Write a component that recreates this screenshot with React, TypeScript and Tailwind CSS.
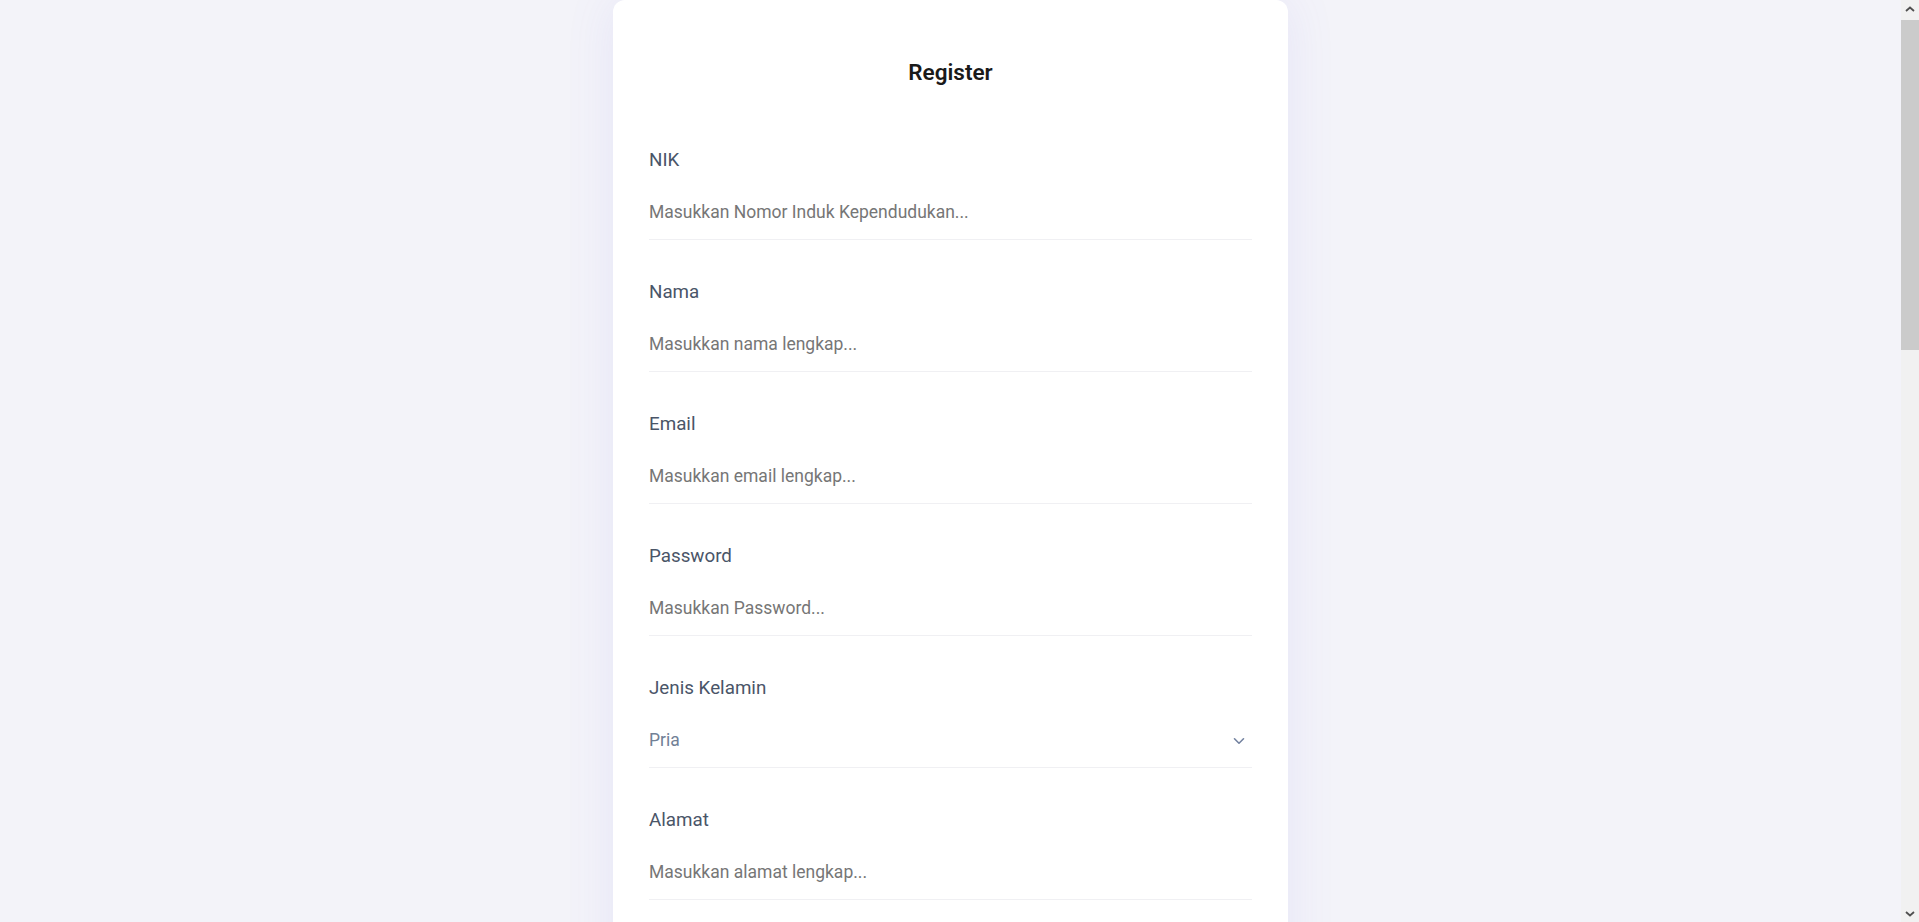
import React from "react";

const fields = [
  { label: "NIK", placeholder: "Masukkan Nomor Induk Kependudukan...", type: "text" },
  { label: "Nama", placeholder: "Masukkan nama lengkap...", type: "text" },
  { label: "Email", placeholder: "Masukkan email lengkap...", type: "email" },
  { label: "Password", placeholder: "Masukkan Password...", type: "password" },
];

const moreFields = [
  { label: "Alamat", placeholder: "Masukkan alamat lengkap...", type: "text" },
  { label: "Nomor Telepon", placeholder: "Masukkan nomor telepon...", type: "text" },
  { label: "Tempat Lahir", placeholder: "Masukkan tempat lahir...", type: "text" },
];

function Field({ label, placeholder, type }: { label: string; placeholder: string; type: string }) {
  return (
    <div className="flex flex-col">
      <label className="text-[18.8px] leading-[28px] text-[#4a5568]">{label}</label>
      <input
        type={type}
        placeholder={placeholder}
        className="mt-[11px] h-[55px] w-full border-b border-[#f0f0f3] bg-transparent text-[17.5px] text-[#4a5568] outline-none placeholder:text-[#767676]"
      />
    </div>
  );
}

function Chevron() {
  return (
    <svg width="12" height="8" viewBox="0 0 12 8" fill="none" className="pointer-events-none absolute right-[7px] top-1/2 -translate-y-1/2">
      <path d="M1.5 1.8 6 6.2 10.5 1.8" stroke="#7382a0" strokeWidth="1.6" strokeLinecap="round" strokeLinejoin="round" />
    </svg>
  );
}

function Scrollbar() {
  return (
    <div className="flex w-[18px] shrink-0 flex-col bg-[#f1f1f1]">
      <div className="flex h-[17px] items-center justify-center">
        <svg width="10" height="6" viewBox="0 0 10 6">
          <path d="M1 5 5 1.5 9 5" fill="none" stroke="#505050" strokeWidth="1.8" />
        </svg>
      </div>
      <div className="mt-[3px] h-[330px] bg-[#cbcbcb]" />
      <div className="flex-1" />
      <div className="flex h-[17px] items-center justify-center">
        <svg width="10" height="6" viewBox="0 0 10 6">
          <path d="M1 1 5 4.5 9 1" fill="none" stroke="#505050" strokeWidth="1.8" />
        </svg>
      </div>
    </div>
  );
}

export default function App() {
  return (
    <div className="flex h-screen overflow-hidden bg-[#f3f3f9] font-['Roboto','Liberation_Sans',sans-serif]">
      <div className="flex flex-1 justify-center overflow-hidden">
        <form className="h-fit w-[675px] rounded-[12px] bg-white px-9 pt-14 pb-24 shadow-[0_0_50px_rgba(120,110,230,0.10)]">
          <h1 className="text-center text-[22.5px] leading-[32px] font-semibold text-[#1a1a1a]">Register</h1>
          <div className="mt-[58px] flex flex-col gap-[38px]">
            {fields.map((f) => (
              <Field key={f.label} {...f} />
            ))}
            <div className="flex flex-col">
              <label className="text-[18.8px] leading-[28px] text-[#4a5568]">Jenis Kelamin</label>
              <div className="relative mt-[11px]">
                <select className="h-[55px] w-full appearance-none border-b border-[#f0f0f3] bg-transparent text-[17.5px] text-[#718096] outline-none">
                  <option>Pria</option>
                  <option>Wanita</option>
                </select>
                <Chevron />
              </div>
            </div>
            {moreFields.map((f) => (
              <Field key={f.label} {...f} />
            ))}
          </div>
          <button
            type="submit"
            className="mt-16 h-[52px] w-full rounded-[10px] bg-[#5b57e6] text-[18px] font-semibold text-white"
          >
            Register
          </button>
        </form>
      </div>
      <Scrollbar />
    </div>
  );
}
